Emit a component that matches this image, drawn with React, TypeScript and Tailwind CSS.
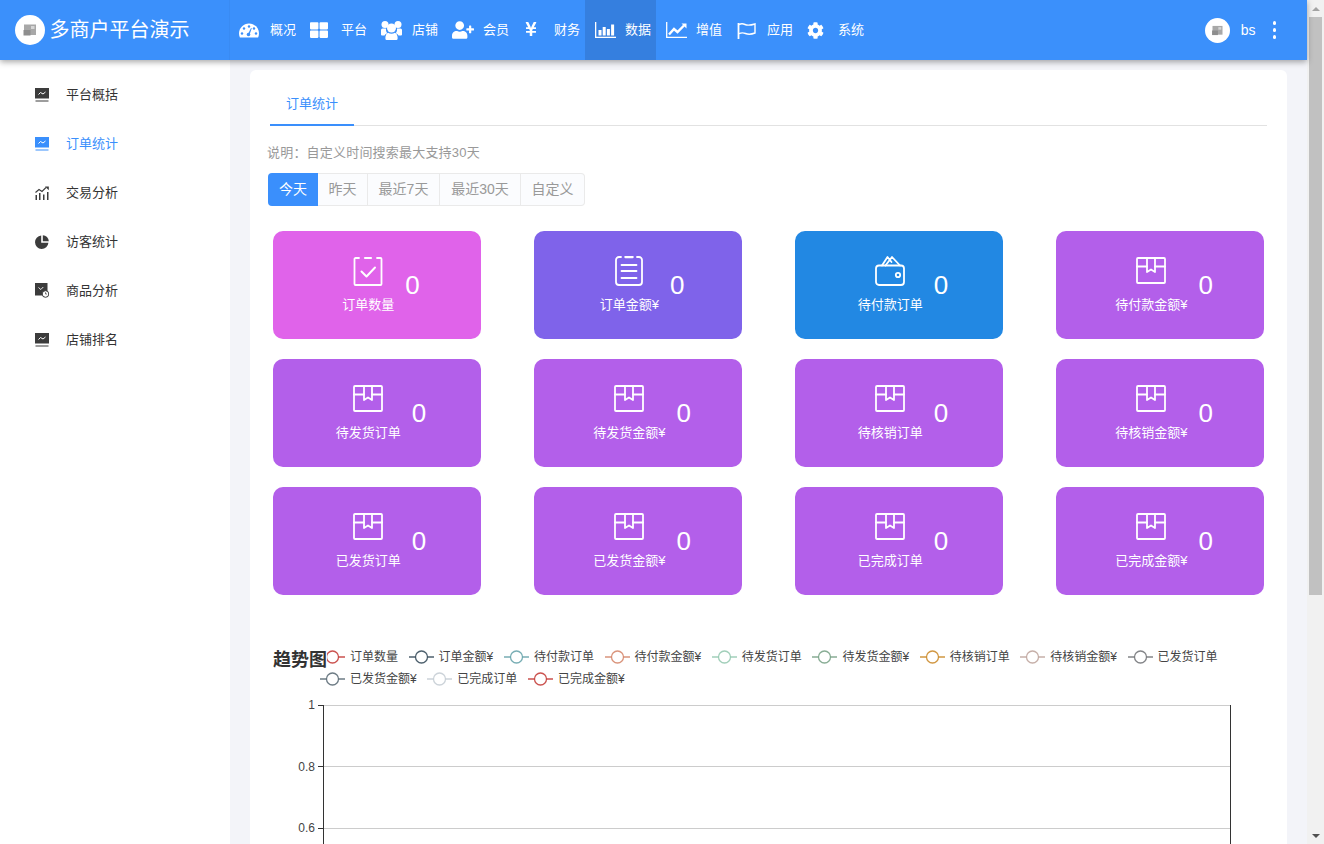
import React from "react";
import { FaThLarge, FaUserPlus, FaYenSign, FaCog } from "react-icons/fa";

const Gauge = () => (
  <svg width="20" height="15" viewBox="0 0 20 15">
    <path d="M10 0.5C4.5 0.5 0 5 0 10.5c0 1.5.3 2.8.9 4h18.2c.6-1.2.9-2.5.9-4C20 5 15.5.5 10 .5z" fill="#fff" />
    <g fill="#3b90fb">
      <circle cx="3" cy="10.5" r="1.2" />
      <circle cx="5" cy="5.5" r="1.2" />
      <circle cx="10" cy="3.5" r="1.2" />
      <circle cx="15" cy="5.5" r="1.2" />
      <circle cx="17" cy="10.5" r="1.2" />
      <circle cx="9.5" cy="11.5" r="1.8" />
      <path d="M9 11l3-6 .8.3-2.2 6z" />
    </g>
  </svg>
);
const Group = () => (
  <svg width="21" height="19" viewBox="0 0 21 19" fill="#fff">
    <circle cx="4" cy="3.5" r="3.5" />
    <circle cx="17" cy="3.5" r="3.5" />
    <path d="M0 9Q0 7.500 1.500 7.500H5Q4.500 11 6.200 12.300Q4 13 3.500 14.500H1Q0 14.500 0 13.500z" />
    <path d="M21 9Q21 7.500 19.500 7.500H16Q16.500 11 14.800 12.300Q17 13 17.500 14.500H20Q21 14.500 21 13.500z" />
    <circle cx="10.500" cy="7" r="4.500" />
    <path d="M5.500 19Q4 19 4.500 15.500Q5 12.500 7 11.800Q10.500 13.800 14 11.800Q16 12.500 16.500 15.500Q17 19 15.500 19z" />
  </svg>
);
const BarAxis = () => (
  <svg width="21" height="16" viewBox="0 0 21 16" fill="#fff">
    <rect x="0" y="0" width="1.3" height="16" />
    <rect x="0" y="14.7" width="21" height="1.3" />
    <rect x="3.5" y="8" width="3" height="5.5" />
    <rect x="7.7" y="5" width="3" height="8.5" />
    <rect x="11.9" y="7" width="3" height="6.5" />
    <rect x="16.1" y="2.5" width="3" height="11" />
  </svg>
);
const LineAxis = () => (
  <svg width="21" height="16" viewBox="0 0 21 16" fill="none" stroke="#fff">
    <path d="M.7 0v15.3H21" strokeWidth="1.3" />
    <path d="M3 12.5l5-5.5 3.5 3L18 3.5" strokeWidth="2.4" />
    <path d="M15.5 1.5H20.5V6.5z" fill="#fff" stroke="none" />
  </svg>
);
const FlagO = () => (
  <svg width="19" height="17" viewBox="0 0 19 17" fill="none" stroke="#fff" strokeWidth="1.4">
    <path d="M1.5 1v16" strokeWidth="1.8" />
    <path d="M2 2.5c2-1 4-1 6 0s5 1 10-.5v9c-4 1.6-7 1.5-9.500.5s-4-1-6.500.2" />
  </svg>
);

const navItems: { label: string; icon: React.ReactNode; active?: boolean; wide?: boolean }[] = [
  { label: "概况", icon: <Gauge /> },
  { label: "平台", icon: <FaThLarge size={18} color="#fff" /> },
  { label: "店铺", icon: <Group /> },
  { label: "会员", icon: <FaUserPlus size={22} color="#fff" /> },
  { label: "财务", icon: <FaYenSign size={16} color="#fff" className="-mt-[3px]" /> },
  { label: "数据", icon: <BarAxis />, active: true, wide: true },
  { label: "增值", icon: <LineAxis />, wide: true },
  { label: "应用", icon: <FlagO />, wide: true },
  { label: "系统", icon: <FaCog size={17} color="#fff" /> },
];

const Avatar = ({ size }: { size: number }) => (
  <svg width={size} height={size} viewBox="0 0 30 30" className="shrink-0">
    <circle cx="15" cy="15" r="15" fill="#fff" />
    <rect x="9" y="9.500" width="12" height="10.500" fill="#a8a8a8" />
    <rect x="8.500" y="15" width="7" height="5.500" fill="#8e8e8e" />
    <rect x="16" y="11" width="3.500" height="3" fill="#d6d6d6" />
  </svg>
);

const Screen = ({ color }: { color: string }) => (
  <svg width="14" height="14" viewBox="0 0 14 14">
    <rect x="0" y="0" width="14" height="10.500" fill={color} />
    <path d="M3.500 6.500l2-2 2.500 1.500 2.500-2" stroke="#fff" strokeWidth="1" fill="none" />
    <rect x="0.500" y="12.500" width="13" height="1" fill={color} />
  </svg>
);
const Trade = () => (
  <svg width="14" height="14" viewBox="0 0 14 14" fill="#3c3c3c">
    <path d="M0.500 6.500l3.500-3 3 2 4-4" fill="none" stroke="#3c3c3c" strokeWidth="1.100" />
    <path d="M10 0.500h3.800v3.800z" />
    <rect x="0.500" y="9" width="1.500" height="5" />
    <rect x="4" y="7" width="1.500" height="7" />
    <rect x="8" y="8.500" width="1.500" height="5.500" />
    <rect x="12" y="6" width="1.500" height="8" />
  </svg>
);
const Pie = () => (
  <svg width="14" height="14" viewBox="0 0 14 14" fill="#3c3c3c">
    <path d="M6.200 0.500A6.700 6.700 0 1 0 13.400 7.700H6.200z" />
    <path d="M7.800 0.200V6.200H13.800A6.200 6.200 0 0 0 7.800.200z" />
  </svg>
);
const Goods = () => (
  <svg width="14" height="15" viewBox="0 0 14 15">
    <rect x="0" y="0" width="12.500" height="12.500" fill="#3c3c3c" />
    <path d="M3.500 4.500l2.300 2 2.500-2.500" stroke="#fff" fill="none" strokeWidth="0.900" />
    <circle cx="10.500" cy="11" r="3.300" fill="#fff" stroke="#3c3c3c" strokeWidth="1" />
    <path d="M10.500 9.300V11h1.500" stroke="#3c3c3c" fill="none" strokeWidth="0.700" />
  </svg>
);

const sideItems: { label: string; icon: React.ReactNode; active?: boolean }[] = [
  { label: "平台概括", icon: <Screen color="#3c3c3c" /> },
  { label: "订单统计", icon: <Screen color="#3a8ffc" />, active: true },
  { label: "交易分析", icon: <Trade /> },
  { label: "访客统计", icon: <Pie /> },
  { label: "商品分析", icon: <Goods /> },
  { label: "店铺排名", icon: <Screen color="#3c3c3c" /> },
];

const CheckIcon = () => (
  <svg width="30" height="30" viewBox="0 0 30 30" fill="none" stroke="#fff" strokeWidth="1.800" strokeLinecap="round" strokeLinejoin="round">
    <path d="M6 2H2.500a1 1 0 0 0-1 1v25a1 1 0 0 0 1 1h25a1 1 0 0 0 1-1V3a1 1 0 0 0-1-1H24" />
    <path d="M12 2h6" strokeWidth="2.200" />
    <path d="M8.500 15.500l5 5 8.500-9" strokeWidth="2" />
  </svg>
);
const ListIcon = () => (
  <svg width="30" height="30" viewBox="0 0 30 30" fill="none" stroke="#fff" strokeWidth="1.800" strokeLinecap="round" strokeLinejoin="round">
    <path d="M7 1H5a3 3 0 0 0-3 3v22a3 3 0 0 0 3 3h20a3 3 0 0 0 3-3V4a3 3 0 0 0-3-3h-2" />
    <path d="M11.500 1h7" strokeWidth="2.400" />
    <path d="M7.500 9h15M7.500 15h15M7.500 22h15" />
  </svg>
);
const WalletIcon = () => (
  <svg width="30" height="30" viewBox="0 0 30 30" fill="none" stroke="#fff" strokeWidth="1.800" strokeLinecap="round" strokeLinejoin="round">
    <rect x="1" y="9.500" width="28" height="19.500" rx="3" />
    <path d="M7 9.500L12.500 1l4 5M10.500 9.500L17 1l8 8.500" />
    <circle cx="23" cy="19" r="2.200" />
  </svg>
);
const BoxIcon = () => (
  <svg width="30" height="30" viewBox="0 0 30 30" fill="none" stroke="#fff" strokeWidth="1.800" strokeLinecap="round" strokeLinejoin="round">
    <rect x="1" y="2" width="28" height="25" rx="1" />
    <path d="M1 10.500h10M19 10.500h10" />
    <path d="M11 2v14l4-2.500 4 2.500V2" />
  </svg>
);

type Stat = { label: string; bg: string; icon: React.ReactNode };
const PURPLE = "bg-[#b35fea]";
const stats: Stat[] = [
  { label: "订单数量", bg: "bg-[#e063ea]", icon: <CheckIcon /> },
  { label: "订单金额¥", bg: "bg-[#7f63ea]", icon: <ListIcon /> },
  { label: "待付款订单", bg: "bg-[#2288e3]", icon: <WalletIcon /> },
  { label: "待付款金额¥", bg: PURPLE, icon: <BoxIcon /> },
  { label: "待发货订单", bg: PURPLE, icon: <BoxIcon /> },
  { label: "待发货金额¥", bg: PURPLE, icon: <BoxIcon /> },
  { label: "待核销订单", bg: PURPLE, icon: <BoxIcon /> },
  { label: "待核销金额¥", bg: PURPLE, icon: <BoxIcon /> },
  { label: "已发货订单", bg: PURPLE, icon: <BoxIcon /> },
  { label: "已发货金额¥", bg: PURPLE, icon: <BoxIcon /> },
  { label: "已完成订单", bg: PURPLE, icon: <BoxIcon /> },
  { label: "已完成金额¥", bg: PURPLE, icon: <BoxIcon /> },
];

const legend: [string, string][] = [
  ["订单数量", "#c23531"],
  ["订单金额¥", "#2f4554"],
  ["待付款订单", "#61a0a8"],
  ["待付款金额¥", "#d48265"],
  ["待发货订单", "#91c7ae"],
  ["待发货金额¥", "#749f83"],
  ["待核销订单", "#ca8622"],
  ["待核销金额¥", "#bda29a"],
  ["已发货订单", "#6e7074"],
  ["已发货金额¥", "#546570"],
  ["已完成订单", "#c4ccd3"],
  ["已完成金额¥", "#c23531"],
];

const ranges = [
  { label: "今天", w: "w-[50px]" },
  { label: "昨天", w: "w-[50px]" },
  { label: "最近7天", w: "w-[72px]" },
  { label: "最近30天", w: "w-[81px]" },
  { label: "自定义", w: "w-[64px]" },
];

export default function App() {
  return (
    <div className="flex h-[844px] w-[1324px] overflow-hidden bg-[#f3f4f9] font-['Liberation_Sans','Noto_Sans_CJK_SC',sans-serif] text-[13px] text-[#333]">
      <div className="flex w-[1307px] shrink-0 flex-col">
        <header className="relative z-10 flex h-[60px] shrink-0 items-center bg-[#3b90fb] shadow-[0_2px_6px_rgba(0,0,0,0.35)]">
          <div className="flex h-full w-[230px] shrink-0 items-center border-r border-black/[0.03] pl-[15px]">
            <Avatar size={30} />
            <span className="ml-[4.500px] text-[20px] text-white">多商户平台演示</span>
          </div>
          <nav className="flex h-full">
            {navItems.map((n) => (
              <div
                key={n.label}
                className={`flex h-full w-[71px] items-center text-white ${n.wide ? "pl-[10px]" : "pl-[9px]"} ${n.active ? "bg-[#357fdf]" : ""}`}
              >
                <span className={`flex items-center ${n.wide ? "w-[30px]" : "w-[31px]"}`}>{n.icon}</span>
                <span>{n.label}</span>
              </div>
            ))}
          </nav>
          <div className="ml-auto flex items-center pr-[31px]">
            <Avatar size={25} />
            <span className="ml-[11px] text-[14px] text-white">bs</span>
            <span className="ml-[17px] flex flex-col gap-[3.500px]">
              <i className="block h-[3.500px] w-[3.500px] rounded-full bg-white" />
              <i className="block h-[3.500px] w-[3.500px] rounded-full bg-white" />
              <i className="block h-[3.500px] w-[3.500px] rounded-full bg-white" />
            </span>
          </div>
        </header>

        <div className="flex min-h-0 flex-1">
          <aside className="w-[230px] shrink-0 bg-white pt-[10px]">
            {sideItems.map((s) => (
              <div key={s.label} className={`flex h-[49px] items-center pl-[35px] ${s.active ? "text-[#3a8ffc]" : "text-[#333]"}`}>
                <span className="flex w-[31px] items-center">{s.icon}</span>
                <span>{s.label}</span>
              </div>
            ))}
          </aside>

          <main className="min-w-0 flex-1 px-5 pt-[10px]">
            <section className="h-[900px] rounded-t-[6px] bg-white">
              <div className="mx-5 flex h-[56px] border-b border-[#e2e2e2]">
                <div className="-mb-px flex w-[84px] items-center justify-center border-b-2 border-[#3a8ffc] pb-[1px] pt-[14px] text-[#3a8ffc]">
                  订单统计
                </div>
              </div>
              <p className="ml-[17px] mt-[17px] leading-[20px] tracking-[0.2px] text-[#999]">说明：自定义时间搜索最大支持30天</p>
              <div className="ml-[18px] mt-[10px] flex h-[33px] w-[317px] text-[14px]">
                {ranges.map((r, i) => (
                  <div
                    key={r.label}
                    className={`flex h-full items-center justify-center ${r.w} ${
                      i === 0
                        ? "rounded-l-[4px] bg-[#3a8ffc] text-white"
                        : `border-y border-r border-[#eaeaea] bg-[#fbfcfe] text-[#999] ${i === 4 ? "rounded-r-[4px]" : ""}`
                    }`}
                  >
                    {r.label}
                  </div>
                ))}
              </div>

              <div className="ml-[23px] mt-[25px] grid w-[991px] grid-cols-4 gap-x-[53px] gap-y-5">
                {stats.map((s) => (
                  <div key={s.label} className={`flex h-[108px] items-center justify-center rounded-[10px] pl-[8px] text-white ${s.bg}`}>
                    <div className="flex flex-col items-center">
                      {s.icon}
                      <span className="mt-[9px] leading-[19px]">{s.label}</span>
                    </div>
                    <span className="ml-[11px] text-[26px] leading-none">0</span>
                  </div>
                ))}
              </div>

              <div className="relative mt-[51px] pl-[70px] pr-[60px]">
                <h3 className="absolute left-[23px] top-[1px] z-10 bg-white text-[18px] font-bold leading-[26px] text-[#333]">趋势图</h3>
                <div className="flex flex-wrap gap-x-[10.600px]">
                  {legend.map(([label, color]) => (
                    <div key={label} className="flex h-[22px] items-center text-[12px] text-[#444]">
                      <svg width="25" height="14" viewBox="0 0 25 14" className="mr-[5px]">
                        <path d="M0 7h6.500M18.500 7H25" stroke={color} strokeWidth="1.500" opacity="0.85" />
                        <circle cx="12.500" cy="7" r="6" fill="#fff" stroke={color} strokeWidth="1.300" opacity="0.85" />
                      </svg>
                      {label}
                    </div>
                  ))}
                </div>
              </div>

              <svg width="1037" height="160" viewBox="0 0 1037 160" className="block">
                <g stroke="#ccc" strokeWidth="1">
                  <path d="M73 15.500H980M73 76.500H980M73 138.500H980" />
                </g>
                <g stroke="#333" strokeWidth="1">
                  <path d="M73.500 15V160M980.500 15V160M68 15.500H73M68 76.500H73M68 138.500H73" />
                </g>
                <g fontSize="12" fill="#444" textAnchor="end" fontFamily="Liberation Sans, sans-serif">
                  <text x="65" y="19">1</text>
                  <text x="65" y="81">0.8</text>
                  <text x="65" y="142">0.6</text>
                </g>
              </svg>
            </section>
          </main>
        </div>
      </div>

      <div className="flex w-[17px] shrink-0 flex-col bg-[#f1f1f1]">
        <div className="flex h-[17px] shrink-0 items-center justify-center">
          <div className="h-0 w-0 border-x-[4px] border-b-[4px] border-x-transparent border-b-[#a3a3a3]" />
        </div>
        <div className="mx-[2px] h-[578px] shrink-0 bg-[#c1c1c1]" />
        <div className="mt-auto flex h-[17px] shrink-0 items-center justify-center">
          <div className="h-0 w-0 border-x-[4px] border-t-[4px] border-x-transparent border-t-[#505050]" />
        </div>
      </div>
    </div>
  );
}
